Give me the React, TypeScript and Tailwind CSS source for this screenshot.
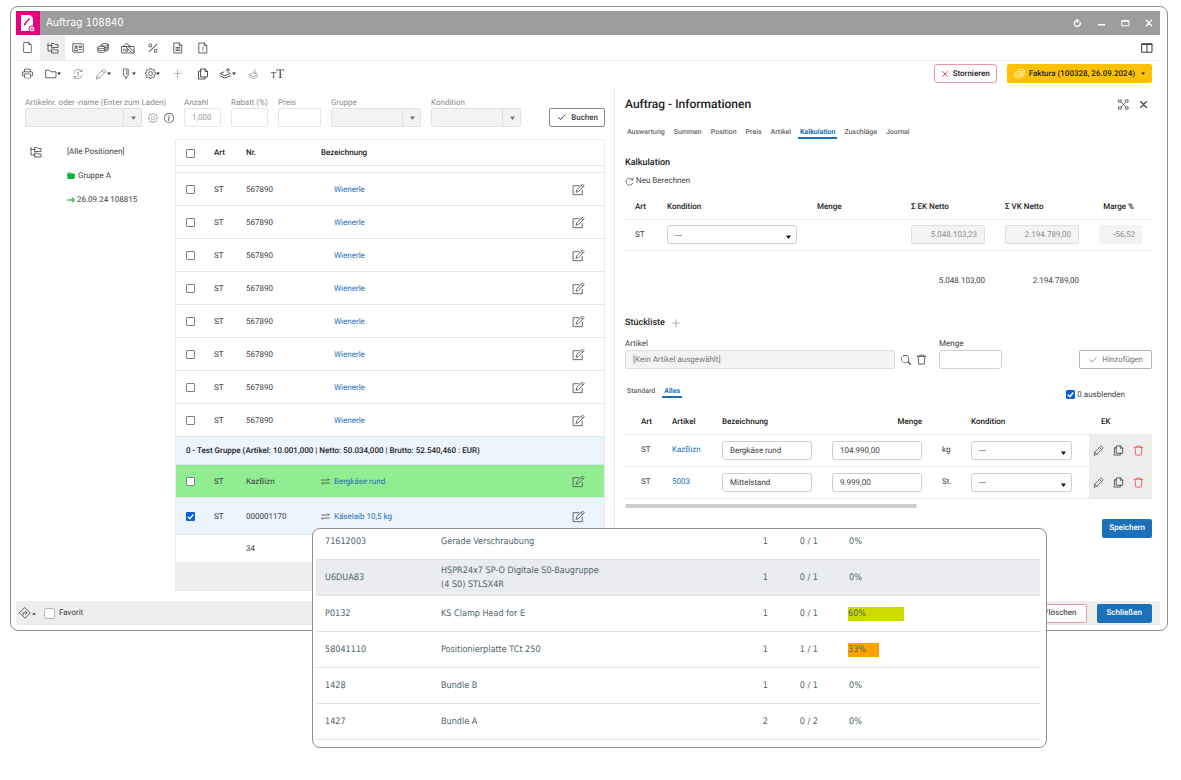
import React from 'react';
import clsx from 'clsx';
import {
  BsArrowRight,
  BsCheck2,
  BsFileEarmark,
  BsFolderFill,
  BsGear,
  BsInfoCircle,
  BsPercent,
  BsPlusLg,
  BsPrinter,
  BsSearch,
} from 'react-icons/bs';

/* ---------- icons ---------- */

interface IconProps {
  className?: string;
  children?: React.ReactNode;
  strokeWidth?: number;
}

const Icon: React.FC<IconProps> = ({ className, children, strokeWidth = 1.6 }) => (
  <svg
    viewBox="0 0 24 24"
    fill="none"
    stroke="currentColor"
    strokeWidth={strokeWidth}
    strokeLinecap="round"
    strokeLinejoin="round"
    className={clsx('shrink-0', className ?? 'size-3')}
    aria-hidden="true"
  >
    {children}
  </svg>
);

const TreeIcon = ({ className }: IconProps) => (
  <Icon className={className}>
    <path d="M2 3v15h8M2 7h8" />
    <path d="M10 3h4l2 2h6v6H10zM10 14h4l2 2h6v6H10z" />
  </Icon>
);

const CardIcon = () => (
  <Icon>
    <rect x="1.500" y="3.500" width="21" height="17" rx="1.500" />
    <circle cx="8" cy="9.500" r="2.200" />
    <path d="M4.500 16.500c.3-3 1.500-4 3.500-4s3.200 1 3.500 4zM15 8h4v3h-4zM15 15h4" />
  </Icon>
);

const CoinsIcon = ({ className }: IconProps) => (
  <Icon className={className}>
    <ellipse cx="15.500" cy="5.500" rx="7" ry="2.700" />
    <path d="M22.500 5.500v10c0 1.500-2.500 2.600-6 2.700M22.500 9c0 1.500-2.500 2.600-6 2.700M22.500 12.300c0 1.500-2.500 2.600-6 2.700M8.500 5.500V8" />
    <ellipse cx="8.500" cy="11" rx="7" ry="2.700" />
    <path d="M1.500 11v7.500c0 1.500 3 2.700 7 2.700s7-1.200 7-2.700V11M1.500 14.800c0 1.500 3 2.700 7 2.700s7-1.200 7-2.700" />
  </Icon>
);

const NotesIcon = () => (
  <Icon className="size-3.5" strokeWidth={1.4}>
    <path d="M1.500 9.500h21v11h-21zM3.500 9.500L9 4l8 5.500" />
    <path d="M8 9.500l11 11M12.500 9.500l10 9M5 13v4" />
    <circle cx="9.500" cy="16" r="2" />
  </Icon>
);

const DocLinesIcon = () => (
  <Icon>
    <path d="M4.500 2h10l5 5v15h-15zM14.500 2v5h5M8 11h8M8 14h8M8 17h8" />
  </Icon>
);

const DocAlertIcon = () => (
  <Icon>
    <path d="M4.500 2h10l5 5v15h-15zM14.500 2v5h5M12 10v5M12 18v.3" />
  </Icon>
);

const FolderIcon = () => (
  <Icon>
    <path d="M2 4.500h7l2.500 3H22v12H2z" />
  </Icon>
);

const CycleIcon = () => (
  <Icon>
    <path d="M3.500 10a9 9 0 0 1 16-3.500M20.500 14a9 9 0 0 1-16 3.500M20 2.500v4.500h-4.500M4 21.500V17h4.500M10.500 9.500l2-1.500v8" />
  </Icon>
);

const RecalcIcon = () => (
  <Icon className="size-[9px]" strokeWidth={1.8}>
    <path d="M20 7A9.500 9.500 0 1 0 21 16M21.500 2v6h-6" />
  </Icon>
);

const CopyIcon = ({ className }: IconProps) => (
  <Icon className={className} strokeWidth={1.8}>
    <path d="M8 2h8.500L21 6.500V18H8zM16 2v5h5M8 6H3v16h13v-4" />
  </Icon>
);

const ColumnsIcon = () => (
  <Icon strokeWidth={2}>
    <path d="M2 3.500h20v17H2zM12 3.500v17M2 5h20" />
  </Icon>
);

const PencilIcon = ({ className }: IconProps) => (
  <Icon className={className}>
    <path d="M2.500 21.500l1.500-6L16.500 3a2 2 0 0 1 2.800 0L21 4.700a2 2 0 0 1 0 2.800L8.500 20zM14 5.500l4.500 4.500M4 15.500L8.500 20" />
  </Icon>
);

const MarkerIcon = () => (
  <Icon strokeWidth={1.5}>
    <path d="M7.500 2h9v12.500l-3 4h-3l-3-4zM13.500 5v8M12 18.500v3.500" />
  </Icon>
);

const LayersUpIcon = () => (
  <Icon className="size-[13px]">
    <path d="M9 9l-7 3 9 4 10-4-2-1M2 16.500l9 4 10-4" />
    <path d="M16.500 10V3M13 6.500L16.500 3 20 6.500" />
  </Icon>
);

const LayersDownIcon = () => (
  <Icon strokeWidth={1.4}>
    <path d="M12 10l-8 3.500 9 4 8-4-2-1M4 17.500l9 4 8-4" />
    <path d="M16 3v8M13 8l3 3 3-3" />
  </Icon>
);

const EditIcon = () => (
  <Icon className="size-[13px] text-[#555]">
    <path d="M19 13.500V21.500H2V5h11" />
    <path d="M7.500 16.500l1.500-4.500L19.500 2l3 3L12 15.500zM17 4.500l3 3" />
  </Icon>
);

const SwapIcon = () => (
  <Icon className="size-[9px]" strokeWidth={2}>
    <path d="M1.500 8h21l-4-4M22.500 16h-21l4 4" />
  </Icon>
);

const TrashIcon = ({ className }: IconProps) => (
  <Icon className={className} strokeWidth={1.8}>
    <path d="M2.500 5h19M8 5V2.500h8V5M4.500 5l1.500 17h12l1.500-17" />
  </Icon>
);

const ExpandIcon = () => (
  <Icon className="size-[11px]">
    <path d="M2 2h5v5H2zM17 2h5v5h-5zM2 17h5v5H2zM17 17h5v5h-5zM8 8l8 8M16 8l-8 8" />
  </Icon>
);

const CrossIcon = ({ className, strokeWidth }: IconProps) => (
  <Icon className={className} strokeWidth={strokeWidth}>
    <path d="M4 4l16 16M20 4L4 20" />
  </Icon>
);

const TurnIcon = () => (
  <Icon>
    <path d="M12 1.500L22.500 12 12 22.500 1.500 12z" />
    <path d="M8.500 15.500v-4H15M13 8.500l3 3-3 3" />
  </Icon>
);

const Caret: React.FC<{ className?: string; up?: boolean }> = ({ className, up }) => (
  <svg viewBox="0 0 10 8" fill="currentColor" className={clsx('shrink-0', className)} aria-hidden="true">
    {up ? <path d="M5 1l5 6H0z" /> : <path d="M0 1h10L5 8z" />}
  </svg>
);

const AppLogo = () => (
  <svg viewBox="0 0 24 24" className="size-6 bg-[#e6007e]" aria-hidden="true">
    <path d="M5 4h9l3 3v13H5z" fill="#fff" />
    <path d="M8.500 14.500l.5-2 4.500-5" stroke="#e6007e" strokeWidth="1.500" fill="none" />
    <circle cx="16" cy="18" r="3" fill="#fff" stroke="#e6007e" strokeWidth="1" />
    <path d="M16 16.500v3M14.500 18h3" stroke="#e6007e" strokeWidth="0.800" />
  </svg>
);

/* ---------- form controls ---------- */

interface TickProps {
  label: string;
  checked?: boolean;
  large?: boolean;
}

const Tick: React.FC<TickProps> = ({ label, checked, large }) => (
  <span className="relative inline-flex align-middle">
    <input
      type="checkbox"
      aria-label={label}
      defaultChecked={checked}
      className={clsx(
        'peer appearance-none border bg-white checked:border-[#0b5fd9] checked:bg-[#0b5fd9]',
        large ? 'size-[11px] rounded-[2px] border-[#b5b5b5]' : 'size-[9px] rounded-[1px] border-[#83808c]',
      )}
    />
    <svg
      viewBox="0 0 10 10"
      className="pointer-events-none absolute inset-0 hidden size-full peer-checked:block"
      aria-hidden="true"
    >
      <path d="M2 5.200L4.200 7.400 8.200 2.800" fill="none" stroke="#fff" strokeWidth="1.500" />
    </svg>
  </span>
);

const ComboField: React.FC<{ id: string; label: string; width: string }> = ({ id, label, width }) => (
  <div className={width}>
    <label htmlFor={id} className="block h-3 pt-px whitespace-nowrap text-[#8c8c8c]">
      {label}
    </label>
    <div className="relative">
      <select id={id} disabled className="block h-[19px] w-full appearance-none rounded-[2px] border border-[#e0e0e0] bg-[#f3f3f3]" />
      <span className="pointer-events-none absolute inset-y-0 right-0 flex w-[19px] items-center justify-center border-l border-[#e0e0e0]">
        <Caret className="h-1 w-[5px] text-[#777]" />
      </span>
    </div>
  </div>
);

const SmallField: React.FC<{ id: string; label: string; width: string; value?: string }> = ({ id, label, width, value }) => (
  <div className={width}>
    <label htmlFor={id} className="block h-3 pt-px whitespace-nowrap text-[#8c8c8c]">
      {label}
    </label>
    <input
      id={id}
      defaultValue={value}
      className="block h-[19px] w-full rounded-[2px] border border-[#e6e6e6] px-[7px] text-[#999]"
    />
  </div>
);

const KonditionSelect: React.FC<{ label: string }> = ({ label }) => (
  <div className="relative">
    <select aria-label={label} className="block h-[19px] w-full appearance-none rounded-[3px] border border-[#d0d0d0] bg-white px-[7px] pt-0.5 text-[#444]">
      <option>---</option>
    </select>
    <Caret className="pointer-events-none absolute top-[10px] right-[6px] h-1 w-[5px] text-[#111]" />
  </div>
);

/* ---------- data ---------- */

interface Position {
  nr: string;
  name: string;
  linked?: boolean;
  checked?: boolean;
  row?: string;
}

const positions: Position[] = Array.from({ length: 8 }, () => ({ nr: '567890', name: 'Wienerle' }));

const groupPositions: Position[] = [
  { nr: 'KazBizn', name: 'Bergkäse rund', linked: true, row: 'h-[33px] bg-[#90ee90]' },
  { nr: '000001170', name: 'Käselaib 10,5 kg', linked: true, checked: true, row: 'h-[37px] bg-[#ecf4fd]' },
];

const infoTabs = ['Auswertung', 'Summen', 'Position', 'Preis', 'Artikel', 'Kalkulation', 'Zuschläge', 'Journal'];

const parts = [
  { nr: 'KazBizn', name: 'Bergkäse rund', amount: '104.990,00', unit: 'kg' },
  { nr: '5003', name: 'Mittelstand', amount: '9.999,00', unit: 'St.' },
];

const progress = [
  { nr: '71612003', name: 'Gerade Verschraubung', count: 1, done: '0 / 1', percent: 0 },
  { nr: 'U6DUA83', name: 'HSPR24x7 SP-O Digitale S0-Baugruppe (4 S0) STLSX4R', count: 1, done: '0 / 1', percent: 0, active: true },
  { nr: 'P0132', name: 'KS Clamp Head for E', count: 1, done: '0 / 1', percent: 60, color: 'bg-[#cddc00]' },
  { nr: '58041110', name: 'Positionierplatte TCt 250', count: 1, done: '1 / 1', percent: 33, color: 'bg-[#ffa200]' },
  { nr: '1428', name: 'Bundle B', count: 1, done: '0 / 1', percent: 0 },
  { nr: '1427', name: 'Bundle A', count: 2, done: '0 / 2', percent: 0 },
];

/* ---------- bars ---------- */

const TitleBar = () => (
  <header className="flex h-6 items-center bg-[#9d9d9d] text-white">
    <AppLogo />
    <h1 className="ml-1.5 flex-1 font-['DejaVu_Sans_Condensed','DejaVu_Sans',sans-serif] text-[11px] leading-4">Auftrag 108840</h1>
    <div className="flex items-center gap-[15px] pr-[7px]">
      <button aria-label="Neu laden">
        <Icon className="size-[9px]" strokeWidth={3.5}>
          <path d="M19 9a8 8 0 1 1-6-5M10 1l5 3-4 5" />
        </Icon>
      </button>
      <button aria-label="Minimieren">
        <Icon className="size-[9px]" strokeWidth={4}>
          <path d="M4 15h16" />
        </Icon>
      </button>
      <button aria-label="Maximieren">
        <Icon className="size-[9px]" strokeWidth={2.5}>
          <path d="M3 4h18v14H3zM3 6h18" />
        </Icon>
      </button>
      <button aria-label="Fenster schließen">
        <CrossIcon className="size-2" strokeWidth={4.5} />
      </button>
    </div>
  </header>
);

const viewButtons = [
  { label: 'Dokument', icon: <BsFileEarmark className="size-[11px]" /> },
  { label: 'Struktur', icon: <TreeIcon />, active: true },
  { label: 'Kontakt', icon: <CardIcon /> },
  { label: 'Preise', icon: <CoinsIcon /> },
  { label: 'Zahlungen', icon: <NotesIcon /> },
  { label: 'Rabatte', icon: <BsPercent className="size-3" /> },
  { label: 'Texte', icon: <DocLinesIcon /> },
  { label: 'Hinweise', icon: <DocAlertIcon /> },
];

const toolButtons = [
  { label: 'Drucken', icon: <BsPrinter className="size-[11px]" /> },
  { label: 'Ordner', icon: <FolderIcon />, menu: true },
  { label: 'Wiederholen', icon: <CycleIcon />, muted: true },
  { label: 'Bearbeiten', icon: <PencilIcon />, menu: true, muted: true },
  { label: 'Markieren', icon: <MarkerIcon />, menu: true },
  { label: 'Einstellungen', icon: <BsGear className="size-[11px]" />, menu: true },
  { label: 'Neu', icon: <BsPlusLg className="size-[11px]" />, muted: true },
  { label: 'Kopieren', icon: <CopyIcon /> },
  { label: 'Ebene hoch', icon: <LayersUpIcon />, menu: true },
  { label: 'Ebene runter', icon: <LayersDownIcon />, muted: true },
];

const Toolbars = () => (
  <>
    <nav className="flex h-[26px] items-center border-b border-[#ececec] pr-[7px]" aria-label="Ansichten">
      <div className="-ml-px flex">
        {viewButtons.map((b) => (
          <button
            key={b.label}
            aria-label={b.label}
            className={clsx('flex h-[25px] w-[25px] items-center justify-center', b.active && 'bg-[#eeeeee]')}
          >
            {b.icon}
          </button>
        ))}
      </div>
      <button className="ml-auto" aria-label="Spalten">
        <ColumnsIcon />
      </button>
    </nav>
    <div className="flex h-[25px] items-center pr-2">
      <div className="-ml-px flex">
        {toolButtons.map((b) => (
          <button
            key={b.label}
            aria-label={b.label}
            className={clsx('flex h-[25px] w-[25px] items-center justify-center', b.muted && 'text-[#8f8f8f]')}
          >
            {b.icon}
            {b.menu && <Caret className="h-[3px] w-1 text-[#222]" />}
          </button>
        ))}
        <button
          aria-label="Schriftgröße"
          className="flex h-[25px] w-[25px] items-baseline justify-center pt-[7px] font-['Liberation_Serif',serif] text-[13px] leading-3"
        >
          <span className="text-[9px]">T</span>T
        </button>
      </div>
      <div className="ml-auto flex gap-2.5 font-medium text-[#222]">
        <button className="flex h-[19px] items-center gap-1 rounded-[3px] border border-[#eb9aa3] px-1.5">
          <CrossIcon className="size-2 text-[#dc3545]" strokeWidth={2.5} />
          Stornieren
        </button>
        <button className="flex h-[19px] items-center gap-1 rounded-[2px] bg-[#ffc107] px-[7px]">
          <CoinsIcon className="size-[11px] text-[#fff3c4]" />
          Faktura (100328, 26.09.2024)
          <Caret className="ml-0.5 h-[3px] w-1" />
        </button>
      </div>
    </div>
  </>
);

/* ---------- left side ---------- */

const BookingForm = () => (
  <form className="flex items-end pl-[9px]" onSubmit={(e) => e.preventDefault()}>
    <ComboField id="artikel" label="Artikelnr. oder -name (Enter zum Laden)" width="w-[117px]" />
    <button type="button" aria-label="Suche einstellen" className="mb-1 ml-1.5 text-[#999]">
      <BsGear className="size-[10px]" />
    </button>
    <button type="button" aria-label="Info" className="mr-2.5 mb-1 ml-1.5">
      <BsInfoCircle className="size-[10px]" />
    </button>
    <div className="flex gap-[10px]">
      <SmallField id="anzahl" label="Anzahl" width="w-[37px]" value="1,000" />
      <SmallField id="rabatt" label="Rabatt (%)" width="w-[37px]" />
      <SmallField id="preis" label="Preis" width="w-[43px]" />
      <ComboField id="gruppe" label="Gruppe" width="w-[90px]" />
      <ComboField id="kondition" label="Kondition" width="w-[90px]" />
    </div>
    <button className="ml-auto flex h-[19px] items-center gap-1 rounded-[2px] border border-[#8a8a8a] px-1.5 font-medium">
      <BsCheck2 className="size-[11px]" />
      Buchen
    </button>
  </form>
);

const Tree = () => (
  <aside className="flex w-[159px] shrink-0 pt-[7px] pl-[14px]">
    <TreeIcon className="size-3" />
    <ul className="ml-[25px]">
      <li className="flex h-3 items-center">
        <a href="#alle">[Alle Positionen]</a>
      </li>
      <li className="mt-3 flex h-3 items-center gap-[3px]">
        <BsFolderFill className="size-2 text-[#00b23c]" />
        <a href="#gruppe-a">Gruppe A</a>
      </li>
      <li className="mt-3 flex h-3 items-center gap-[2px]">
        <BsArrowRight className="size-2 stroke-1 text-[#00b23c]" />
        <a href="#108815">26.09.24 108815</a>
      </li>
    </ul>
  </aside>
);

const PositionRow: React.FC<{ item: Position }> = ({ item }) => (
  <tr className={clsx('border-b border-[#e4e8ea] *:pt-0.5', item.row ?? 'h-[33px]')}>
    <td className="pl-[10px]">
      <Tick label={`Position ${item.nr}`} checked={item.checked} />
    </td>
    <td>ST</td>
    <td>{item.nr}</td>
    <td>
      <span className="flex items-center gap-1">
        {item.linked ? <SwapIcon /> : <span className="w-[9px]" />}
        <a href="#position" className="text-[#1c70b8]">
          {item.name}
        </a>
      </span>
    </td>
    <td>
      <button aria-label="Position bearbeiten" className="flex items-center">
        <EditIcon />
      </button>
    </td>
  </tr>
);

const PositionTable = () => (
  <div className="min-w-0 flex-1 border border-[#e8ecec]">
    <table className="w-full table-fixed border-collapse text-left">
      <colgroup>
        <col className="w-[38px]" />
        <col className="w-8" />
        <col className="w-[75px]" />
        <col />
        <col className="w-8" />
      </colgroup>
      <thead>
        <tr className="h-[25px] border-b border-[#e4e8ea] *:pt-0.5">
          <th className="pl-[10px]">
            <Tick label="Alle auswählen" />
          </th>
          <th className="font-medium text-[#222]">Art</th>
          <th className="font-medium text-[#222]">Nr.</th>
          <th className="font-medium text-[#222]">Bezeichnung</th>
          <th aria-label="Aktion" />
        </tr>
      </thead>
      <tbody>
        <tr className="h-[7px] border-b border-[#e4e8ea]">
          <td colSpan={5} />
        </tr>
        {positions.map((item, i) => (
          <PositionRow key={i} item={item} />
        ))}
        <tr className="h-7 border-b border-[#d5e0ea] bg-[#ecf4fd]">
          <td colSpan={5} className="pt-0.5 pl-[10px] font-medium text-[#222]">
            0 - Test Gruppe (Artikel: 10.001,000 | Netto: 50.034,000 | Brutto: 52.540,460 : EUR)
          </td>
        </tr>
        {groupPositions.map((item) => (
          <PositionRow key={item.nr} item={item} />
        ))}
        <tr className="h-7">
          <td colSpan={2} />
          <td className="pt-0.5">34</td>
          <td colSpan={2} />
        </tr>
        <tr className="h-7 bg-[#eeeeee]">
          <td colSpan={5} />
        </tr>
      </tbody>
    </table>
  </div>
);

/* ---------- right side ---------- */

const Tab: React.FC<{ label: string; active?: boolean }> = ({ label, active }) => (
  <button
    role="tab"
    aria-selected={!!active}
    className={clsx(
      'h-[13px] border-b-2 px-[2px] text-[7px] leading-[10px]',
      active ? 'border-[#1c70b8] font-bold text-[#1c70b8]' : 'border-transparent font-medium text-[#666]',
    )}
  >
    {label}
  </button>
);

const Calculation = () => (
  <section>
    <h3 className="text-[9px] leading-3 font-medium text-[#222]">Kalkulation</h3>
    <button className="mt-1.5 flex items-center gap-[2px]">
      <RecalcIcon />
      Neu Berechnen
    </button>
    <table className="mt-1 w-full table-fixed border-collapse text-left">
      <colgroup>
        <col className="w-[42px]" />
        <col className="w-[150px]" />
        <col />
        <col className="w-[94px]" />
        <col className="w-[94px]" />
        <col className="w-[53px]" />
      </colgroup>
      <thead>
        <tr className="h-7 border-b border-[#ececec] text-[#222] *:pt-1">
          <th className="pl-[10px] font-medium">Art</th>
          <th className="font-medium">Kondition</th>
          <th className="font-medium">Menge</th>
          <th className="font-medium">Σ EK Netto</th>
          <th className="font-medium">Σ VK Netto</th>
          <th className="pr-[18px] text-right font-medium whitespace-nowrap">Marge %</th>
        </tr>
      </thead>
      <tbody>
        <tr className="h-[31px] border-b border-[#ececec]">
          <td className="pl-[10px]">ST</td>
          <td className="pr-5">
            <KonditionSelect label="Kondition" />
          </td>
          <td />
          <td className="pr-5">
            <input aria-label="Σ EK Netto" readOnly defaultValue="5.048.103,23" className="block h-[19px] w-full rounded-[2px] border border-[#dedede] bg-[#f3f3f3] px-[7px] text-right text-[#8c8c8c]" />
          </td>
          <td className="pr-5">
            <input aria-label="Σ VK Netto" readOnly defaultValue="2.194.789,00" className="block h-[19px] w-full rounded-[2px] border border-[#dedede] bg-[#f3f3f3] px-[7px] text-right text-[#8c8c8c]" />
          </td>
          <td className="pr-[10px]">
            <input aria-label="Marge %" readOnly defaultValue="-56,52" className="block h-[19px] w-full rounded-[2px] bg-[#f3f3f3] px-[7px] text-right text-[#8c8c8c]" />
          </td>
        </tr>
        <tr className="h-[62px] text-right">
          <td colSpan={3} />
          <td className="pr-5">5.048.103,00</td>
          <td className="pr-5">2.194.789,00</td>
          <td />
        </tr>
      </tbody>
    </table>
  </section>
);

const PartsList = () => (
  <section className="mt-[5px]">
    <h3 className="flex items-center gap-1.5 text-[9px] leading-3 font-medium text-[#222]">
      Stückliste
      <button aria-label="Stückliste erweitern" className="text-[#777]">
        <BsPlusLg className="size-[10px]" />
      </button>
    </h3>
    <form className="mt-[9px] flex items-end" onSubmit={(e) => e.preventDefault()}>
      <div className="max-w-[270px] flex-1">
        <label htmlFor="teil" className="block">
          Artikel
        </label>
        <input
          id="teil"
          readOnly
          defaultValue="[Kein Artikel ausgewählt]"
          className="block h-[19px] w-full rounded-[2px] border border-[#dedede] bg-[#f3f3f3] px-[7px] text-[#777]"
        />
      </div>
      <button type="button" aria-label="Artikel suchen" className="mb-1 ml-1.5">
        <BsSearch className="size-[10px]" />
      </button>
      <button type="button" aria-label="Artikel entfernen" className="mr-3 mb-1 ml-[5px]">
        <TrashIcon className="size-[11px]" />
      </button>
      <div className="w-[63px]">
        <label htmlFor="menge" className="block">
          Menge
        </label>
        <input id="menge" className="block h-[19px] w-full rounded-[3px] border border-[#d0d0d0] px-[7px]" />
      </div>
      <button className="ml-auto flex h-[19px] items-center gap-1 rounded-[2px] border border-[#b5b5b5] px-2 text-[#777]">
        <BsCheck2 className="size-[10px]" />
        Hinzufügen
      </button>
    </form>
    <div className="mt-4 flex">
      <div role="tablist" className="flex h-[13px] gap-[5px]">
        <Tab label="Standard" />
        <Tab label="Alles" active />
      </div>
      <label className="mt-1 mr-[27px] ml-auto flex h-[11px] items-center gap-[2px]">
        <Tick label="0 ausblenden" checked />0 ausblenden
      </label>
    </div>
    <table className="mt-2 w-full table-fixed border-collapse text-left">
      <colgroup>
        <col className="w-[47px]" />
        <col className="w-[50px]" />
        <col className="w-[110px]" />
        <col className="w-[110px]" />
        <col className="w-[29px]" />
        <col />
        <col className="w-[63px]" />
      </colgroup>
      <thead>
        <tr className="h-[26px] border-b border-[#ececec] text-[#222] *:pt-0.5">
          <th className="pl-4 font-medium">Art</th>
          <th className="font-medium">Artikel</th>
          <th className="font-medium">Bezeichnung</th>
          <th className="pr-5 text-right font-medium">Menge</th>
          <th aria-label="Einheit" />
          <th className="font-medium">Kondition</th>
          <th className="pl-3 font-medium">EK</th>
        </tr>
      </thead>
      <tbody>
        {parts.map((p) => (
          <tr key={p.nr} className="h-8 border-b border-[#ececec]">
            <td className="pl-4">ST</td>
            <td>
              <a href="#artikel" className="text-[#1c70b8]">
                {p.nr}
              </a>
            </td>
            <td className="pr-5">
              <input aria-label="Bezeichnung" defaultValue={p.name} className="block h-[19px] w-full rounded-[3px] border border-[#d0d0d0] px-[7px]" />
            </td>
            <td className="pr-5">
              <input aria-label="Menge" defaultValue={p.amount} className="block h-[19px] w-full rounded-[3px] border border-[#d0d0d0] px-[7px]" />
            </td>
            <td>{p.unit}</td>
            <td className="pr-[17px]">
              <KonditionSelect label={`Kondition ${p.name}`} />
            </td>
            <td className="bg-[#eeeeee]">
              <span className="flex items-center justify-between pr-2 pl-1">
                <button aria-label="Bearbeiten">
                  <PencilIcon className="size-[11px]" />
                </button>
                <button aria-label="Kopieren">
                  <CopyIcon className="size-[11px]" />
                </button>
                <button aria-label="Löschen" className="text-[#e25563]">
                  <TrashIcon className="size-[11px]" />
                </button>
              </span>
            </td>
          </tr>
        ))}
      </tbody>
    </table>
    <div className="mt-[5px] h-1 w-[292px] rounded-full bg-[#cccccc]" />
    <div className="mt-[11px] flex justify-end">
      <button className="h-[19px] rounded-[2px] bg-[#1c70b8] px-[7px] font-medium text-white">Speichern</button>
    </div>
  </section>
);

const InfoPanel = () => (
  <section className="border-l border-[#ececec] pt-[10px] pr-2 pl-[10px]">
    <div className="flex items-center">
      <h2 className="flex-1 text-[12px] leading-4 font-medium text-[#222]">Auftrag - Informationen</h2>
      <div className="flex items-center gap-[10px] pr-1">
        <button aria-label="Vergrößern">
          <ExpandIcon />
        </button>
        <button aria-label="Panel schließen">
          <CrossIcon className="size-[9px]" strokeWidth={3} />
        </button>
      </div>
    </div>
    <div role="tablist" className="mt-[14px] mb-[18px] flex gap-[5px]">
      {infoTabs.map((t) => (
        <Tab key={t} label={t} active={t === 'Kalkulation'} />
      ))}
    </div>
    <Calculation />
    <PartsList />
  </section>
);

/* ---------- overlay list ---------- */

const ProgressCard = () => (
  <div className="absolute top-[528px] left-[312px] w-[735px] rounded-lg border border-[#8f8f8f] bg-white pr-1.5 pb-[7px] pl-[3px] font-['DejaVu_Sans_Condensed','DejaVu_Sans',sans-serif] text-[9px] leading-[14px] text-[#51646c]">
    <table className="w-full table-fixed border-collapse text-left">
      <colgroup>
        <col className="w-[125px]" />
        <col className="w-[180px]" />
        <col className="w-[147px]" />
        <col className="w-[50px]" />
        <col />
      </colgroup>
      <tbody>
        {progress.map((p, i) => (
          <tr
            key={p.nr}
            className={clsx('border-b border-[#dfe4e7]', i === 0 ? 'h-[30px] *:pb-1' : 'h-9 *:pt-0.5', p.active && 'bg-[#eaecf0]')}
          >
            <td className="pl-[9px]">{p.nr}</td>
            <td className="pr-4">{p.name}</td>
            <td className="text-right">{p.count}</td>
            <td className="text-right">{p.done}</td>
            <td className="pl-[30px]">
              <div className="w-[93px]">
                <div className={clsx('h-[14px]', p.color ?? 'pl-px')} style={p.percent ? { width: `${p.percent}%` } : undefined}>
                  {p.percent}%
                </div>
              </div>
            </td>
          </tr>
        ))}
      </tbody>
    </table>
  </div>
);

export default function App() {
  return (
    <main className="relative min-h-screen bg-white pt-[6px] pr-[13px] pb-8 pl-[10px] font-['Roboto','Liberation_Sans',sans-serif] text-[8px] leading-3 text-[#3c4043] **:[text-rendering:geometricPrecision]">
      <div className="rounded-lg border border-[#8f8f8f] bg-white pt-1 pr-[7px] pb-[5px] pl-[5px]">
        <TitleBar />
        <Toolbars />
        <div className="grid grid-cols-[598fr_546fr]">
          <section className="min-w-0 pt-[10px] pr-[9px] pb-[10px]">
            <BookingForm />
            <div className="mt-3 flex">
              <Tree />
              <PositionTable />
            </div>
          </section>
          <InfoPanel />
        </div>
        <footer className="flex h-6 items-center bg-[#eeeeee] pr-2 pl-[3px]">
          <button aria-label="Navigation" className="flex items-center gap-px">
            <TurnIcon />
            <Caret up className="h-[3px] w-1" />
          </button>
          <label className="ml-2 flex items-center gap-1">
            <Tick label="Favorit" large />
            Favorit
          </label>
          <div className="ml-auto flex gap-2.5 font-medium">
            <button className="h-[19px] rounded-[2px] border border-[#eb9aa3] bg-white px-[9px] text-[#555]">Stornieren/löschen</button>
            <button className="h-[19px] rounded-[2px] bg-[#1c70b8] px-[10px] text-white">Schließen</button>
          </div>
        </footer>
      </div>
      <ProgressCard />
    </main>
  );
}
